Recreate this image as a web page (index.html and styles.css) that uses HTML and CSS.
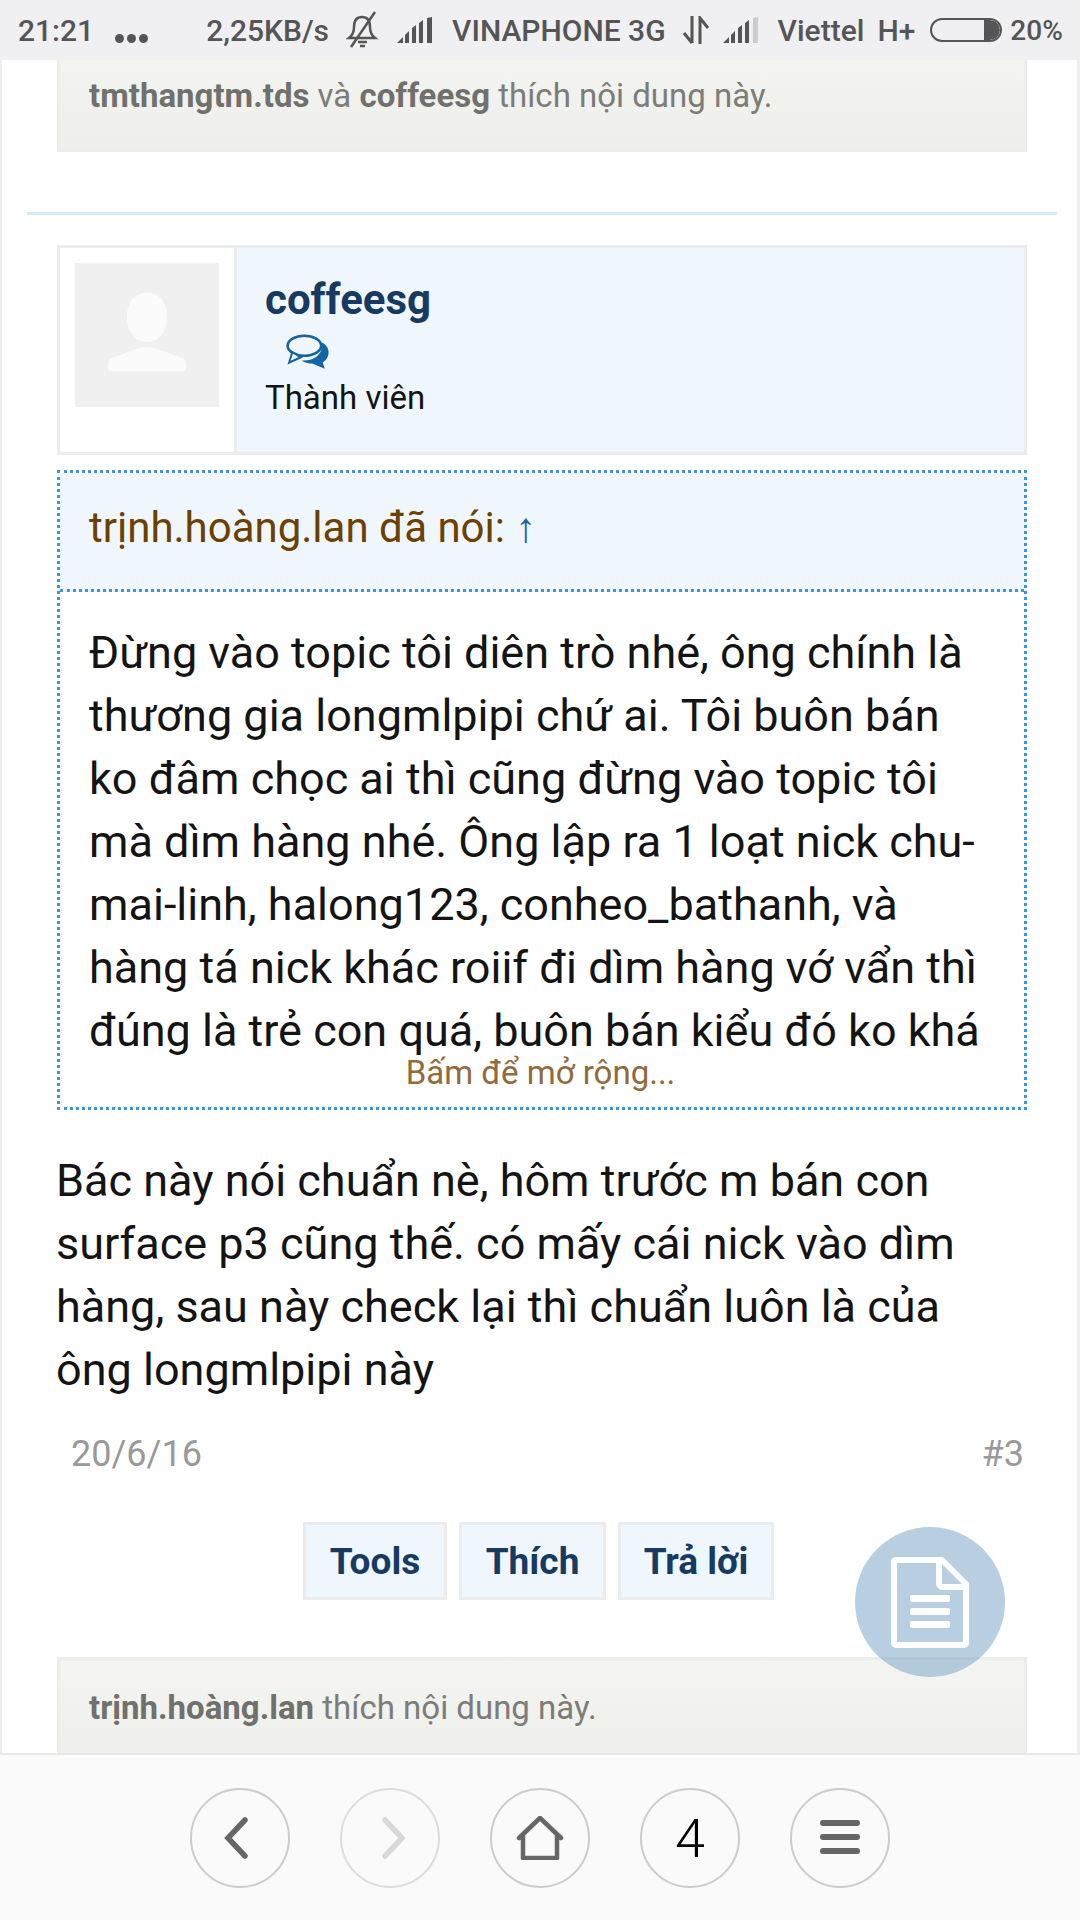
FILE: index.html
```html
<!DOCTYPE html>
<html lang="vi">
<head>
  <meta charset="UTF-8" />
  <meta name="viewport" content="width=device-width, initial-scale=1.0"/>
  <title>coffeesg</title>
  <link rel="stylesheet" href="styles.css">
</head>
<body>
  <div class="status-bar">
    <span class="st-time">21:21</span>
    <span class="st-dots"><i></i><i></i><i></i></span>
    <span class="st-speed">2,25KB/s</span>
    <svg class="st-bell" width="33" height="38" viewBox="0 0 33 38">
      <path d="M16 6c-6 0-8 4-8 10 0 5-1 8-5 11h26c-4-3-5-6-5-11 0-6-2-10-8-10z" fill="none" stroke="#555" stroke-width="2.5"/>
      <path d="M12 31h9M14 35h5" stroke="#555" stroke-width="2.5"/>
      <path d="M29 1L5 36" stroke="#555" stroke-width="2.5"/>
    </svg>
    <svg class="st-signal" width="38" height="26" viewBox="0 0 38 26">
      <path d="M0 26L6 20V26zM8 18l4-4v12H8zM15 11l4-3v18h-4zM22 6l4-3v23h-4zM30 1l5-1v26h-5z" fill="#555"/>
    </svg>
    <span class="st-net1">VINAPHONE 3G</span>
    <svg class="st-arrows" width="28" height="28" viewBox="0 0 28 28">
      <path d="M10 0v27M2 17l8 10" fill="none" stroke="#555" stroke-width="3"/>
      <path d="M18 28V2l8 10" fill="none" stroke="#555" stroke-width="3"/>
    </svg>
    <svg class="st-signal2" width="38" height="26" viewBox="0 0 38 26">
      <path d="M0 26L6 20V26zM8 18l4-4v12H8zM15 11l4-3v18h-4zM22 6l4-3v23h-4z" fill="#555"/>
      <path d="M30 1l5-1v26h-5z" fill="#ccc"/>
    </svg>
    <span class="st-net2">Viettel</span>
    <span class="st-hplus">H+</span>
    <span class="st-battery"><i></i></span>
    <span class="st-pct">20%</span>
  </div>

  <div class="page">
    <div class="likes likes-top">
      <b>tmthangtm.tds</b> và <b>coffeesg</b> thích nội dung này.
    </div>

    <div class="divider"></div>

    <div class="user-box">
      <div class="avatar-cell">
        <div class="avatar">
          <svg width="144" height="144" viewBox="0 0 144 144">
            <path d="M72 30c-13 0-20 9-20 24 0 16 9 25 20 25s20-9 20-25c0-15-7-24-20-24z" fill="#fbfbfb"/>
            <path d="M72 84c-10 0-20 6-35 11-3 1-4 3-4 6v4c0 2 1 3 3 3h72c2 0 3-1 3-3v-4c0-3-1-5-4-6-15-5-25-11-35-11z" fill="#fbfbfb"/>
          </svg>
        </div>
      </div>
      <div class="user-info">
        <a class="user-name">coffeesg</a>
        <svg class="chat-icon" width="44" height="35" viewBox="0 0 42 33">
          <ellipse cx="18.500" cy="11" rx="16" ry="9.500" fill="none" stroke="#1565a0" stroke-width="2.500"/>
          <path d="M7 17L4 27l11-5z" fill="#fff" stroke="#1565a0" stroke-width="2"/>
          <path d="M9 19.500L5 25l7-3z" fill="#eff6fc"/>
          <path d="M35 8c7 3 8 10 5 15-1 2-3 3-4 4l2 6-12-5c-4 0-7-1-10-3 9 1 21-4 19-17z" fill="#1565a0"/>
        </svg>
        <div class="user-role">Thành viên</div>
      </div>
    </div>

    <div class="quote">
      <div class="quote-head">trịnh.hoàng.lan đã nói: <span class="quote-arrow">↑</span></div>
      <div class="quote-body">
        Đừng vào topic tôi diên trò nhé, ông chính là thương gia longmlpipi chứ ai. Tôi buôn bán ko đâm chọc ai thì cũng đừng vào topic tôi mà dìm hàng nhé. Ông lập ra 1 loạt nick chu-mai-linh, halong123, conheo_bathanh, và hàng tá nick khác roiif đi dìm hàng vớ vẩn thì đúng là trẻ con quá, buôn bán kiểu đó ko khá
        <div class="quote-more">Bấm để mở rộng...</div>
      </div>
    </div>

    <div class="post-text">
      Bác này nói chuẩn nè, hôm trước m bán con surface p3 cũng thế. có mấy cái nick vào dìm hàng, sau này check lại thì chuẩn luôn là của ông longmlpipi này
    </div>

    <div class="post-meta">
      <span>20/6/16</span>
      <span>#3</span>
    </div>

    <div class="post-actions">
      <a class="btn btn-tools">Tools</a>
      <a class="btn btn-like">Thích</a>
      <a class="btn btn-reply">Trả lời</a>
    </div>

    <div class="likes likes-bottom">
      <b>trịnh.hoàng.lan</b> thích nội dung này.
    </div>
  </div>

  <div class="fab">
    <svg width="78" height="91" viewBox="0 0 78 91">
      <path d="M4 3h47l24 24v59a2 2 0 0 1-2 2H5a2 2 0 0 1-2-2V4z" fill="none" stroke="#fff" stroke-width="6" stroke-linejoin="round"/>
      <path d="M48 4v22a4 4 0 0 0 4 4h23" fill="none" stroke="#fff" stroke-width="6"/>
      <rect x="19" y="38" width="40" height="7" rx="2" fill="#fff"/>
      <rect x="19" y="51" width="40" height="7" rx="2" fill="#fff"/>
      <rect x="19" y="64" width="40" height="7" rx="2" fill="#fff"/>
    </svg>
  </div>

  <div class="bottom-bar">
    <div class="nav-btn">
      <svg class="nav-back" width="26" height="42" viewBox="0 0 26 42"><path d="M22 3L5 21l17 18" fill="none" stroke="#666" stroke-width="5.500" stroke-linecap="round"/></svg>
    </div>
    <div class="nav-btn nav-off">
      <svg class="nav-forward" width="26" height="42" viewBox="0 0 26 42"><path d="M4 3l17 18L4 39" fill="none" stroke="#d8d8d8" stroke-width="5.500" stroke-linecap="round"/></svg>
    </div>
    <div class="nav-btn">
      <svg width="48" height="44" viewBox="0 0 48 44"><path d="M3 22L24 2l21 20M7 19v23h34V19" fill="none" stroke="#666" stroke-width="4.500" stroke-linecap="round" stroke-linejoin="round"/></svg>
    </div>
    <div class="nav-btn nav-count">4</div>
    <div class="nav-btn">
      <svg width="40" height="36" viewBox="0 0 40 36">
        <rect width="40" height="6" rx="3" fill="#666"/>
        <rect y="14" width="40" height="6" rx="3" fill="#666"/>
        <rect y="28" width="40" height="6" rx="3" fill="#666"/>
      </svg>
    </div>
  </div>
</body>
</html>
```

FILE: styles.css
```css
html, body {
  margin: 0;
  padding: 0;
}
body {
  width: 1080px;
  height: 1920px;
  overflow: hidden;
  position: relative;
  display: flex;
  flex-direction: column;
  font-family: Roboto, "Noto Sans", sans-serif;
  background-color: white;
  color: #141414;
}

/* status bar */
.status-bar {
  height: 60px;
  flex: none;
  display: flex;
  align-items: center;
  background-color: #f0f0f2;
  color: #555;
  font-size: 30px;
  font-weight: 500;
  white-space: nowrap;
}
.st-time { margin-left: 18px; }
.st-dots { margin-left: 21px; display: flex; gap: 3px; padding-top: 16px; }
.st-dots i { width: 9px; height: 9px; border-radius: 50%; background-color: #555; }
.st-speed { margin-left: 58px; }
.st-bell { margin-left: 17px; }
.st-signal { margin-left: 18px; }
.st-net1 { margin-left: 17px; }
.st-arrows { margin-left: 16px; }
.st-signal2 { margin-left: 13px; }
.st-net2 { margin-left: 17px; }
.st-hplus { margin-left: 13px; }
.st-battery {
  margin-left: 15px;
  width: 72px;
  height: 24px;
  box-sizing: border-box;
  border: 2px solid #555;
  border-radius: 12px;
  display: flex;
  justify-content: flex-end;
  overflow: hidden;
}
.st-battery i { width: 16px; background-color: #555; border-radius: 0 10px 10px 0; }
.st-pct { margin-left: 8px; font-size: 28px; }

/* page */
.page {
  flex: 1;
  min-height: 0;
  overflow: hidden;
  border-left: 2px solid #eee;
  border-right: 3px solid #eee;
  padding: 0 50px 0 55px;
}
.likes {
  box-sizing: border-box;
  height: 107px;
  padding: 28px 29px;
  border: 3px solid #ececec;
  background: linear-gradient(#f4f5f1, #eeefea);
  color: #7c7c78;
  font-size: 33px;
  line-height: 40px;
}
.likes b { color: #70706c; font-weight: 700; }
.likes-top { margin-top: -15px; }
.divider {
  height: 3px;
  margin: 60px -30px 0 -30px;
  background-color: #d7ebf9;
}

.user-box {
  display: flex;
  height: 210px;
  box-sizing: border-box;
  margin-top: 30px;
  border: 3px solid #ececec;
}
.avatar-cell {
  padding: 15px;
  box-sizing: border-box;
  border-right: 3px solid #ececec;
  flex: none;
  width: 177px;
}
.avatar {
  width: 144px;
  height: 144px;
  background-color: #f0f0f0;
}
.avatar svg { display: block; }
.user-info {
  flex: 1;
  background-color: #eff6fc;
  padding: 28px 0 0 28px;
}
.user-name {
  display: block;
  font-size: 42px;
  line-height: 48px;
  font-weight: 700;
  color: #173a63;
}
.chat-icon {
  display: block;
  margin: 10px 0 0 20px;
}
.user-role {
  margin-top: 8px;
  font-size: 33px;
  line-height: 42px;
}

.quote {
  margin-top: 15px;
  border: 3px dotted #3d94d6;
}
.quote-head {
  box-sizing: border-box;
  height: 119px;
  padding: 0 29px 8px;
  display: flex;
  align-items: center;
  gap: 10px;
  background-color: #eff6fc;
  border-bottom: 3px dotted #3d94d6;
  color: #6b4000;
  font-size: 42px;
}
.quote-arrow { color: #1565a0; }
.quote-body {
  position: relative;
  height: 515px;
  overflow: hidden;
  padding: 29px 28px 0 29px;
  box-sizing: border-box;
  font-size: 45px;
  line-height: 63px;
}
.quote-more {
  position: absolute;
  left: 0;
  right: 3px;
  bottom: 0;
  height: 51px;
  background-color: white;
  text-align: center;
  color: #8f6b3e;
  font-size: 33px;
  line-height: 34px;
}

.post-text {
  margin: 39px 20px 0 -1px;
  font-size: 45px;
  line-height: 63px;
}
.post-meta {
  display: flex;
  justify-content: space-between;
  margin-top: 32px;
  padding: 0 3px 0 14px;
  color: #999;
  font-size: 36px;
  line-height: 42px;
}
.post-actions {
  display: flex;
  gap: 12px;
  margin-top: 47px;
  margin-left: 246px;
}
.btn {
  box-sizing: border-box;
  height: 78px;
  border: 3px solid #ececec;
  background-color: #eff6fc;
  color: #173a63;
  font-size: 37px;
  font-weight: 700;
  display: flex;
  align-items: center;
  justify-content: center;
}
.btn-tools { width: 144px; }
.btn-like { width: 147px; }
.btn-reply { width: 156px; }
.likes-bottom { margin-top: 57px; height: 110px; }

/* floating button */
.fab {
  position: absolute;
  left: 855px;
  top: 1527px;
  width: 150px;
  height: 150px;
  border-radius: 50%;
  background-color: rgba(120, 165, 200, 0.53);
  display: flex;
  align-items: center;
  justify-content: center;
}
.fab svg { display: block; }

/* bottom bar */
.bottom-bar {
  height: 167px;
  flex: none;
  box-sizing: border-box;
  border-top: 2px solid #e8e8e4;
  background-color: #fafafa;
  display: flex;
  justify-content: center;
  gap: 50px;
  padding-top: 33px;
}
.nav-btn {
  box-sizing: border-box;
  width: 100px;
  height: 100px;
  border: 2px solid #ccc;
  border-radius: 50%;
  display: flex;
  align-items: center;
  justify-content: center;
}
.nav-off { border-color: #ddd; }
.nav-back { margin-right: 8px; }
.nav-forward { margin-left: 8px; }
.nav-count {
  color: #000;
  font-size: 54px;
  font-weight: 300;
}
```
